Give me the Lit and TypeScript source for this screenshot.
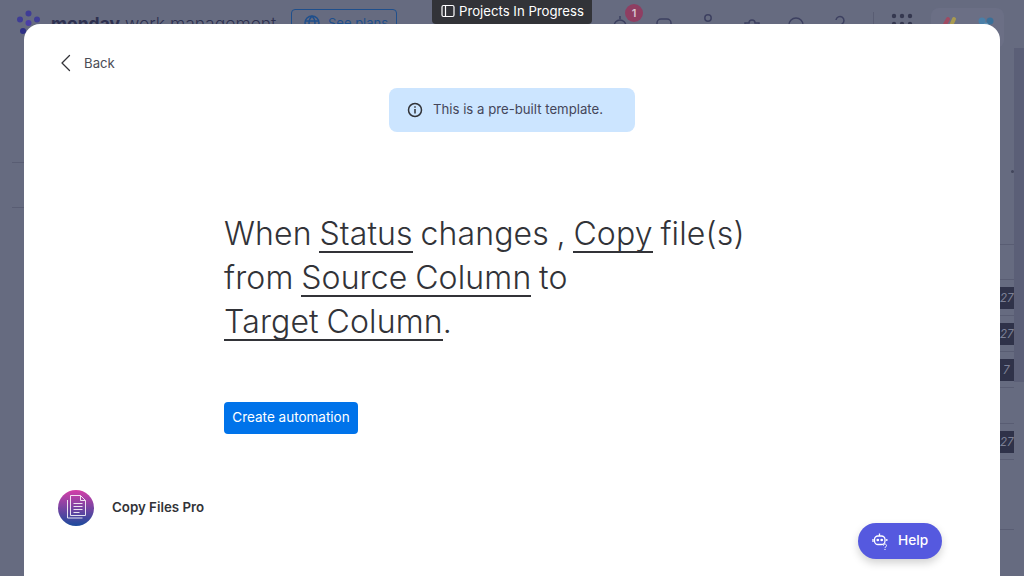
import { LitElement, html, css, svg } from "lit";
import { customElement } from "lit/decorators.js";

const rows = [
  { label: "", h: "first", clip: false },
  { label: "27", h: "", clip: false },
  { label: "27", h: "", clip: false },
  { label: "7", h: "", clip: true },
  { label: "", h: "", clip: false },
  { label: "27", h: "", clip: false },
  { label: "", h: "", clip: false },
];

@customElement("app-root")
export class AppRoot extends LitElement {
  static styles = css`
    :host { display: block; width: 1024px; height: 576px; position: relative; overflow: hidden; background: #666b80; font-family: Inter, "Liberation Sans", sans-serif; }
    .back-layer { width: 1024px; height: 576px; display: flex; flex-direction: column; overflow: hidden; color: #3d4060; }
    .topbar { height: 48px; flex: none; display: flex; align-items: flex-start; padding: 10px 0 0 16px; box-sizing: border-box; }
    .logo { width: 28px; height: 28px; margin-right: 7px; flex: none; }
    .brand { font-size: 17.5px; line-height: 28px; white-space: nowrap; color: #2e3150; width: 240px; flex: none; }
    .brand b { font-weight: 700; }
    .brand span { font-weight: 300; }
    .plans { width: 106px; height: 28px; margin-top: -1px; box-sizing: border-box; border: 1px solid #1f4f8c; border-radius: 4px; display: flex; align-items: center; gap: 7px; padding-left: 11px; color: #1f4f8c; font-size: 13px; flex: none; }
    .icons { margin-left: 201px; display: flex; position: relative; flex: none; }
    .icons svg { display: block; }
    .badge { position: absolute; left: 27px; top: -6px; width: 18px; height: 18px; border-radius: 50%; background: #8f3e62; color: #d8c5d0; font-size: 11px; font-weight: 600; line-height: 18px; text-align: center; }
    .apps { margin-left: 11px; width: 60px; flex: none; }
    .pill { width: 73px; height: 40px; margin: -2px 0 0 -2px; background: #6b6f85; border-radius: 8px; display: flex; gap: 14px; padding: 6px 0 0 8px; box-sizing: border-box; flex: none; }
    .board { flex: 1; display: flex; justify-content: space-between; }
    .left { width: 24px; padding: 114px 0 0 12px; box-sizing: border-box; flex: none; }
    .left div { height: 45px; border-top: 1px solid #595d73; box-sizing: border-box; }
    .right { width: 24px; display: flex; flex: none; }
    .cells { width: 14px; padding-top: 196px; flex: none; }
    .cell { height: 36px; box-sizing: border-box; border-top: 1px solid #595d73; padding-top: 7px; }
    .cell.first { height: 35px; }
    .cell.last { margin-top: 34px; }
    .tag { display: block; width: 14px; height: 22px; background: #2f3249; color: #7c8095; font-size: 11.5px; line-height: 22px; font-style: italic; white-space: nowrap; text-align: left; }
    .tag.clip { text-indent: 3px; }
    .scroll { width: 10px; height: 334px; background: #5b5f77; flex: none; }
    .dot { width: 3px; height: 3px; border-radius: 50%; background: #43465c; margin: 122px 0 0 -3px; }
    .tip { position: absolute; left: 432px; top: 0; width: 160px; height: 24px; box-sizing: border-box; background: #323338; border-radius: 0 0 4px 4px; color: #fff; font-size: 13.2px; line-height: 22px; padding: 0 0 2px 9px; display: flex; align-items: center; gap: 4px; white-space: nowrap; }
    .modal { position: absolute; left: 24px; top: 24px; width: 976px; height: 552px; background: #fff; border-radius: 16px 16px 0 0; box-sizing: border-box; color: #323338; overflow: hidden; }
    .back { display: flex; align-items: center; gap: 10px; padding: 30px 0 0 34px; height: 18px; font-size: 13.2px; color: #4b4c55; box-sizing: content-box; }
    .note-wrap { display: flex; justify-content: center; margin-top: 16px; }
    .note { width: 246px; height: 44px; border-radius: 8px; background: #cce5ff; display: flex; align-items: center; gap: 10px; padding-left: 18px; box-sizing: border-box; font-size: 13.2px; color: #44465a; white-space: nowrap; }
    .up { margin-top: -2px; }
    .main { margin: 80px 0 0 200px; width: 580px; }
    .sentence { margin: 0; font-family: Inter, "Liberation Sans", sans-serif; font-size: 32px; font-weight: 300; line-height: 44px; letter-spacing: .15px; word-spacing: -1.5px; color: #323338; white-space: nowrap; }
    .sentence u { text-decoration: none; border-bottom: 2px solid #323338; display: inline-block; line-height: 37px; height: 36px; }
    .create { margin-top: 58px; display: block; width: 134px; height: 32px; border: 0; padding: 0 0 3px; border-radius: 4px; background: #0073ea; color: #fff; font: 400 13.5px Inter, "Liberation Sans", sans-serif; }
    .app { position: absolute; left: 34px; top: 466px; display: flex; align-items: center; gap: 18px; font-size: 13.3px; font-weight: 600; color: #323338; }
    .help { position: absolute; left: 834px; top: 499px; width: 84px; height: 36px; border-radius: 18px; background: #5559df; color: #fff; display: flex; align-items: center; gap: 8px; padding-left: 14px; box-sizing: border-box; font-size: 13.7px; font-weight: 500; box-shadow: 0 4px 8px rgba(0,0,0,.18); }
  `;

  private topIcon(d: unknown) {
    return html`<svg width="44" height="28" viewBox="0 0 44 28" fill="none" stroke="#3d4060" stroke-width="1.5">${d}</svg>`;
  }

  render() {
    return html`
      <div class="back-layer">
        <div class="topbar">
          <svg class="logo" viewBox="0 0 28 28">
            <circle cx="12.500" cy="3.500" r="3" fill="#3f3d96"/><circle cx="4" cy="9.500" r="3" fill="#3f3d96"/>
            <circle cx="21" cy="9.500" r="3" fill="#3f3d96"/><circle cx="12.500" cy="13" r="3" fill="#4a3fa5"/>
            <circle cx="7" cy="21" r="3" fill="#2e2f86"/><circle cx="18" cy="21" r="3" fill="#2e2f86"/>
          </svg>
          <div class="brand"><b>monday</b> <span>work management</span></div>
          <div class="plans">
            <svg width="18" height="18" viewBox="0 0 18 18" fill="none" stroke="#1f4f8c" stroke-width="1.500"><circle cx="9" cy="9" r="7"/><path d="M2 7h14M2 11h14M9 2c-4 4-4 10 0 14M9 2c4 4 4 10 0 14"/></svg>
            See plans
          </div>
          <div class="icons">
            <span class="badge">1</span>
            ${this.topIcon(svg`<path d="M16 24v-8a6 6 0 0 1 12 0v8"/><path d="M22 6v3"/>`)}
            ${this.topIcon(svg`<path d="M15 24v-11a4 4 0 0 1 4-4h6a4 4 0 0 1 4 4v11"/>`)}
            ${this.topIcon(svg`<circle cx="22" cy="8" r="3.200"/><path d="M16 24v-3a6 6 0 0 1 12 0v3"/>`)}
            ${this.topIcon(svg`<path d="M15 24v-11h4a3 3 0 1 1 6 0h4v11"/>`)}
            ${this.topIcon(svg`<circle cx="22" cy="15" r="7"/>`)}
            ${this.topIcon(svg`<path d="M18 10a4 4 0 1 1 6 4c-1.500 1-2 2-2 4"/><circle cx="22" cy="22" r=".8"/>`)}
            <svg class="apps" width="60" height="28" viewBox="0 0 60 28" fill="#35384f">
              <rect x="0" y="2" width="1" height="22" fill="#595d73"/>
              <circle cx="21" cy="6" r="2.200"/><circle cx="29" cy="6" r="2.200"/><circle cx="37" cy="6" r="2.200"/>
              <circle cx="21" cy="14" r="2.200"/><circle cx="29" cy="14" r="2.200"/><circle cx="37" cy="14" r="2.200"/>
            </svg>
          </div>
          <div class="pill">
            <svg width="22" height="22" viewBox="0 0 22 22"><path d="M4 14l5-9" stroke="#a04a62" stroke-width="4" stroke-linecap="round"/><path d="M11 14l4-9" stroke="#a89a50" stroke-width="4" stroke-linecap="round"/></svg>
            <svg width="22" height="22" viewBox="0 0 22 22"><circle cx="7" cy="7" r="3.500" fill="#4a7fa8"/><circle cx="15" cy="7" r="3.500" fill="#3a6f98"/><circle cx="11" cy="11" r="2.500" fill="#5a8fb5"/></svg>
          </div>
        </div>
        <div class="board">
          <div class="left"><div></div><div></div></div>
          <div class="right">
            <div class="cells">
              ${rows.map((r) => html`<div class="cell ${r.h}">${r.label ? html`<span class="tag ${r.clip ? "clip" : ""}">${r.label}</span>` : ""}</div>`)}
              <div class="cell last"></div>
            </div>
            <div class="scroll"><div class="dot"></div></div>
          </div>
        </div>
      </div>

      <div class="tip">
        <svg width="14" height="14" viewBox="0 0 14 14" fill="none" stroke="#fff" stroke-width="1.200"><rect x="1" y="1.500" width="12" height="11" rx="1.500"/><path d="M4.500 1.500v11"/></svg>
        Projects In Progress
      </div>

      <div class="modal">
        <div class="back">
          <svg width="16" height="18" viewBox="0 0 16 18" fill="none" stroke="#323338" stroke-width="1.300" stroke-linecap="round" stroke-linejoin="round"><path d="M11.500 1.500L4 9l7.500 7.500"/></svg>
          Back
        </div>
        <div class="note-wrap">
          <div class="note">
            <svg width="16" height="16" viewBox="0 0 16 16" fill="none" stroke="#323338" stroke-width="1.500"><circle cx="8" cy="8" r="6.500"/><path d="M8 7v4.500"/><path d="M8 4.200v1.500"/></svg>
            <span class="up">This is a pre-built template.</span>
          </div>
        </div>
        <div class="main">
          <p class="sentence">When <u>Status</u> changes , <u>Copy</u> file(s)<br/>from <u>Source Column</u> to<br/><u>Target Column</u>.</p>
          <button class="create">Create automation</button>
        </div>
        <div class="app">
          <svg width="36" height="36" viewBox="0 0 36 36">
            <defs><linearGradient id="g" x1="0" y1="0" x2="0" y2="1"><stop offset="0" stop-color="#d43fa8"/><stop offset="1" stop-color="#1b4a9c"/></linearGradient></defs>
            <circle cx="18" cy="18" r="18" fill="url(#g)"/>
            <g fill="none" stroke="#fff" stroke-width="1" opacity=".85">
              <path d="M9.500 10v18h15"/>
              <path d="M12.500 5.500h10l5 5v15h-15z"/>
              <path d="M22.500 5.500v5h5"/>
              <path d="M15.500 13.500h9M15.500 16.500h9M15.500 19.500h9M15.500 22.500h6"/>
            </g>
          </svg>
          <span class="up">Copy Files Pro</span>
        </div>
        <div class="help">
          <svg width="18" height="18" viewBox="0 0 18 18" fill="none" stroke="#fff" stroke-width="1.300"><rect x="2.500" y="4" width="10.500" height="8.500" rx="3.500"/><path d="M7.500 1.500V4M1 7v3M14.800 7v2"/><circle cx="5.800" cy="8" r=".7" fill="#fff"/><circle cx="9.700" cy="8" r=".7" fill="#fff"/><path d="M11.500 13.500a1.500 1.500 0 1 1 2.300 1.300c-.6.400-.8.700-.8 1.200" stroke-width="1"/><circle cx="13" cy="17.300" r=".4" fill="#fff" stroke-width=".5"/></svg>
          <span class="up">Help</span>
        </div>
      </div>
    `;
  }
}
